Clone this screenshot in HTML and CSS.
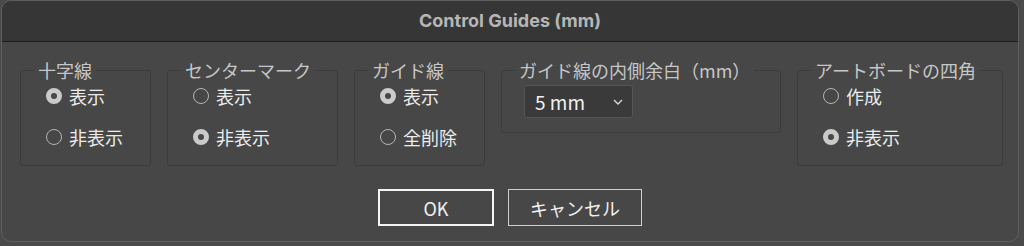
FILE: index.html
```html
<!DOCTYPE html>
<html>
<head>
    <title>Control Guides (mm)</title>
    <link rel="stylesheet" href="styles.css">
</head>
<body>
    <div class="dialog">
        <div class="title-bar">Control Guides (mm)</div>
        <div class="dialog-body">
            <div class="groups">
                <fieldset class="group w-cross">
                    <legend>十字線</legend>
                    <div class="options">
                        <label class="radio"><span class="dot checked"></span>表示</label>
                        <label class="radio"><span class="dot"></span>非表示</label>
                    </div>
                </fieldset>
                <fieldset class="group w-center">
                    <legend>センターマーク</legend>
                    <div class="options">
                        <label class="radio"><span class="dot"></span>表示</label>
                        <label class="radio"><span class="dot checked"></span>非表示</label>
                    </div>
                </fieldset>
                <fieldset class="group w-guide">
                    <legend>ガイド線</legend>
                    <div class="options">
                        <label class="radio"><span class="dot checked"></span>表示</label>
                        <label class="radio"><span class="dot"></span>全削除</label>
                    </div>
                </fieldset>
                <fieldset class="group w-margin">
                    <legend>ガイド線の内側余白（mm）</legend>
                    <div class="select-wrap">
                        <div class="select">
                            <span>5 mm</span>
                            <svg width="10" height="6" viewBox="0 0 10 6"><path d="M1 1 L5 5 L9 1" fill="none" stroke="#d8d8d8" stroke-width="1.4"/></svg>
                        </div>
                    </div>
                </fieldset>
                <fieldset class="group w-board">
                    <legend>アートボードの四角</legend>
                    <div class="options">
                        <label class="radio"><span class="dot"></span>作成</label>
                        <label class="radio"><span class="dot checked"></span>非表示</label>
                    </div>
                </fieldset>
            </div>
            <div class="buttons">
                <button class="btn btn-ok">OK</button>
                <button class="btn btn-cancel">キャンセル</button>
            </div>
        </div>
    </div>
</body>
</html>
```

FILE: styles.css
```css
html, body {
    margin: 0;
    padding: 0;
    background-color: #4a4a4a;
}
body {
    font-family: "Noto Sans CJK JP", "Noto Sans", sans-serif;
    width: 1024px;
    height: 246px;
    overflow: hidden;
}
.dialog {
    width: 1018px;
    height: 242px;
    margin-left: 1px;
    box-sizing: border-box;
    border: 1px solid #5e5e5e;
    border-radius: 10px;
    background: #474747;
    overflow: hidden;
}
.title-bar {
    height: 40px;
    line-height: 40px;
    background: #363636;
    border-bottom: 1px solid #1d1d1d;
    color: #b6b6b6;
    text-align: center;
    font-family: Inter, "Noto Sans", sans-serif;
    font-weight: 700;
    font-size: 18px;
    letter-spacing: 0;
}
.dialog-body {
    padding: 16px 0 0 18px;
}
.groups {
    display: flex;
    align-items: flex-start;
    gap: 16px;
}
.group {
    margin: 0;
    padding: 0;
    min-width: 0;
    box-sizing: border-box;
    border: 1px solid #3c3c3c;
    border-radius: 3px;
}
.group legend {
    margin-left: 13px;
    padding: 0 4px;
    font-size: 18px;
    line-height: 24px;
    color: #c6c6c6;
}
.w-cross { width: 131px; }
.w-center { width: 171px; }
.w-guide { width: 131px; }
.w-margin { width: 280px; }
.w-board { width: 206px; }
.options {
    display: flex;
    flex-direction: column;
    gap: 15px;
    padding: 1px 0 15px 25px;
}
.radio {
    display: flex;
    align-items: center;
    gap: 7px;
    height: 26px;
    font-size: 18px;
    color: #ececec;
}
.dot {
    width: 16px;
    height: 16px;
    box-sizing: border-box;
    border: 1.3px solid #b4b4b4;
    border-radius: 50%;
    flex-shrink: 0;
}
.dot.checked {
    border: 5px solid #cacaca;
    background: #474747;
}
.select-wrap {
    padding: 3px 0 14px 22px;
}
.select {
    width: 109px;
    height: 33px;
    box-sizing: border-box;
    display: flex;
    align-items: center;
    justify-content: space-between;
    padding: 0 9px 0 10px;
    background: #3a3a3a;
    border: 1px solid #555;
    border-radius: 3px;
    color: #f0f0f0;
    font-size: 19px;
}
.buttons {
    display: flex;
    justify-content: center;
    gap: 14px;
    margin-top: 23px;
    padding-right: 18px;
}
.btn {
    height: 37px;
    box-sizing: border-box;
    background: #474747;
    color: #f0f0f0;
    font-family: "Noto Sans CJK JP", "Noto Sans", sans-serif;
    font-size: 18px;
    border-radius: 0;
    padding: 0;
}
.btn-ok {
    width: 116px;
    border: 2px solid #f4f4f4;
}
.btn-cancel {
    width: 134px;
    border: 1px solid #cfcfcf;
}
```
